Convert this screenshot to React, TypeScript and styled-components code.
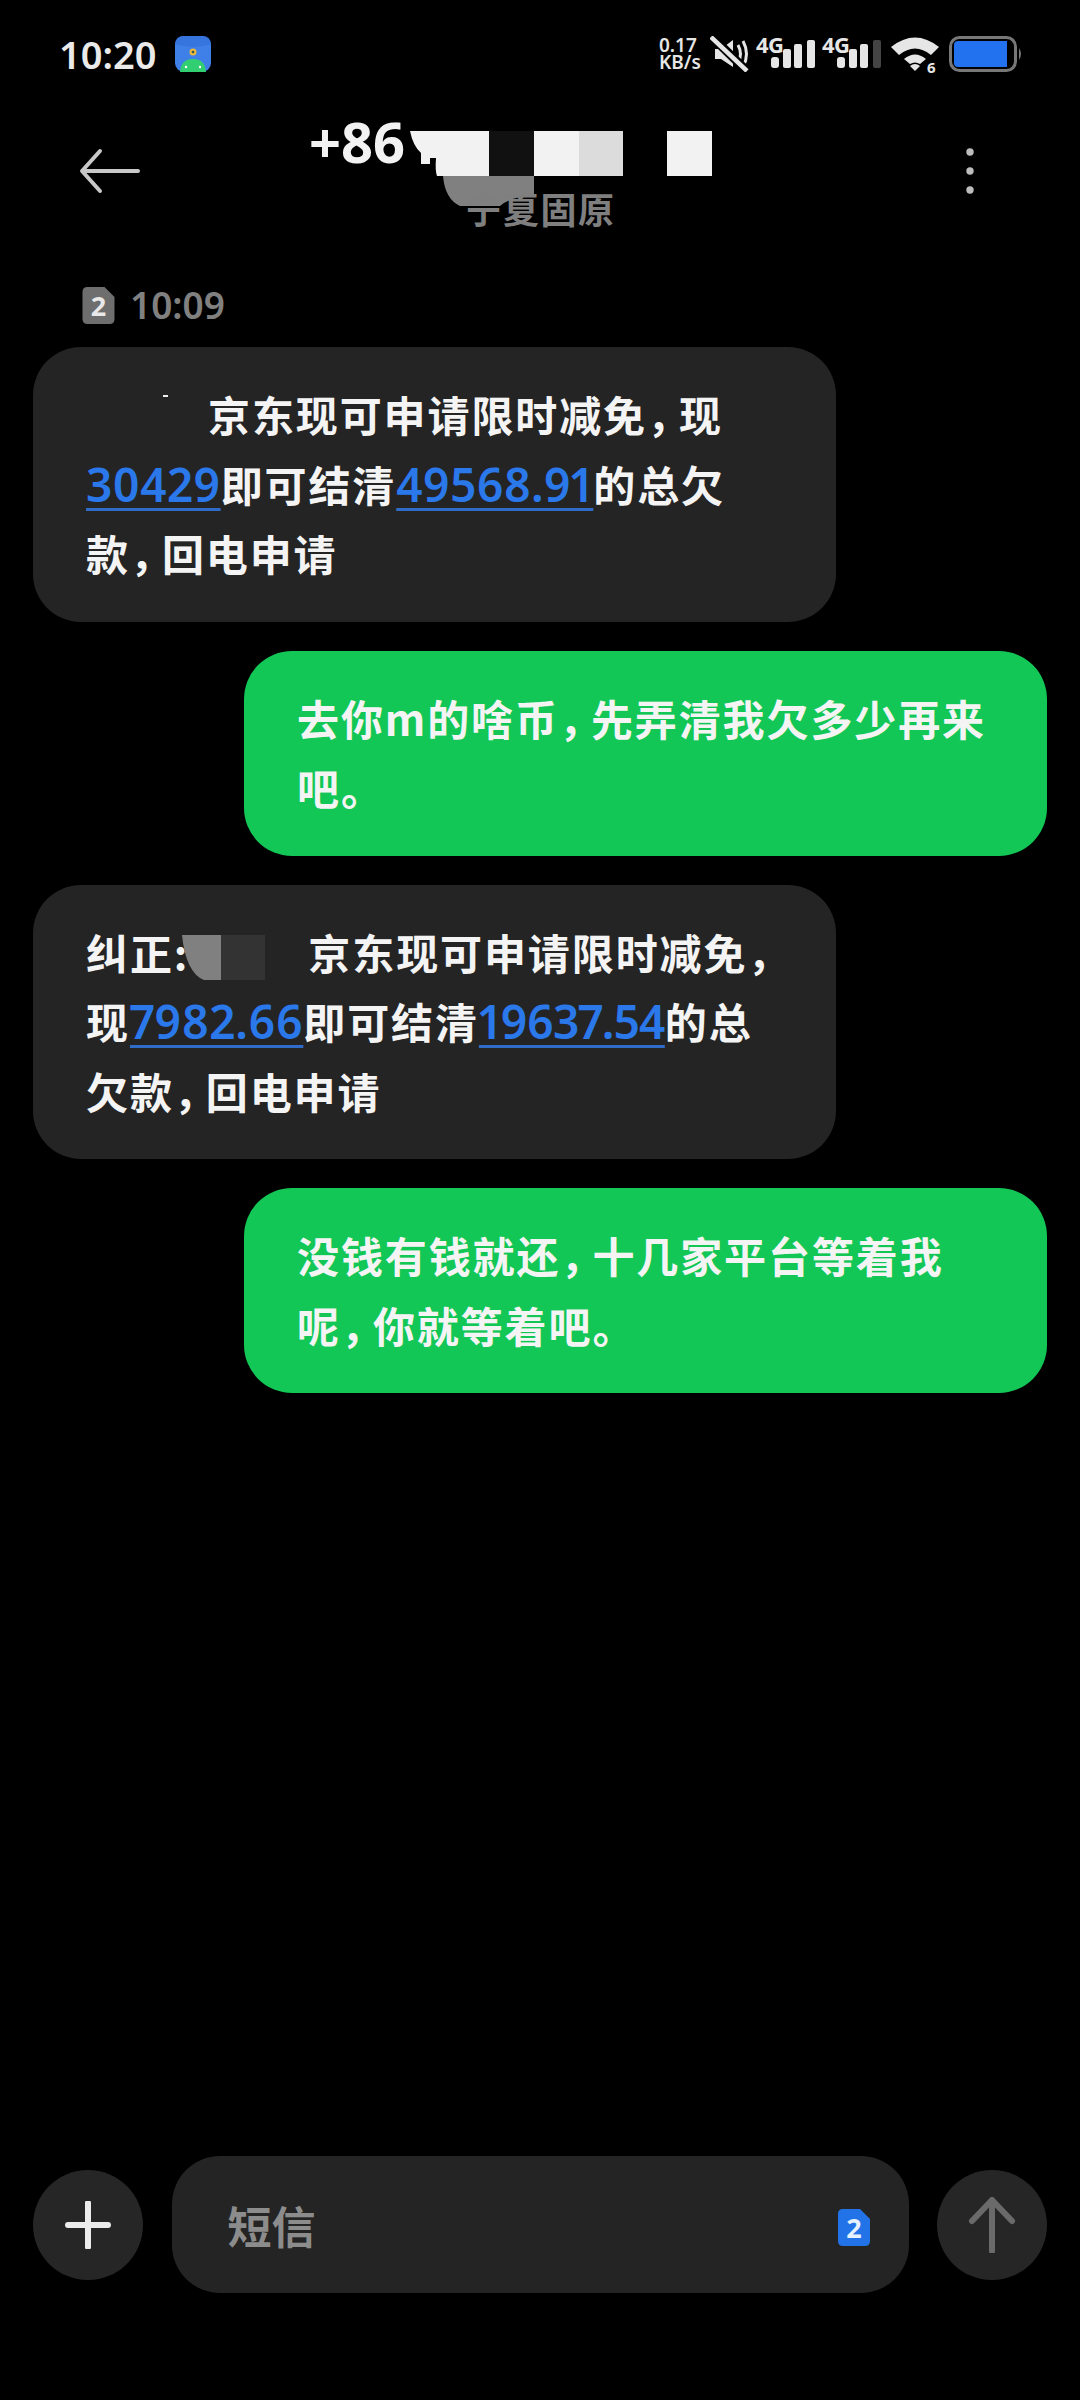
import React from "react";
import styled, { createGlobalStyle } from "styled-components";

const Global = createGlobalStyle`
  html, body { margin: 0; padding: 0; background: #000; }
  body { font-family: "Noto Sans CJK SC", "Noto Sans", sans-serif; }
`;

const Screen = styled.div`
  width: 1080px;
  height: 2400px;
  background: #000;
  display: flex;
  flex-direction: column;
  overflow: hidden;
`;

const StatusBar = styled.div`
  height: 72px;
  padding: 36px 57px 0 59px;
  display: flex;
  align-items: flex-start;
  box-sizing: content-box;
`;

const Clock = styled.div`
  font: 600 38px/36px "Noto Sans", sans-serif;
  color: #eaeaea;
  width: 116px;
`;

const StatusRight = styled.div`
  margin-left: auto;
  display: flex;
  align-items: flex-start;
  height: 36px;
`;

const Speed = styled.div`
  font: 600 19px/17px "Noto Sans", sans-serif;
  color: #e6e6e6;
  width: 51px;
  padding-top: 1px;
`;

const Header = styled.div`
  position: relative;
  height: 120px;
  margin-top: -2px;
  display: flex;
  flex-direction: column;
  align-items: center;
`;

const BackIcon = styled.svg`
  position: absolute;
  left: 78px;
  top: 38px;
`;

const MenuIcon = styled.svg`
  position: absolute;
  left: 962px;
  top: 39px;
`;

const Title = styled.div`
  align-self: flex-start;
  margin-left: 309px;
  display: flex;
  align-items: flex-start;
  height: 85px;
  font: 700 56px/70px "Noto Sans", sans-serif;
  color: #f2f2f2;
`;

const TitleMosaic = styled.div`
  position: absolute;
  left: 410px;
  top: 25px;
`;

const Subtitle = styled.div`
  font: 700 36px/36px "Noto Sans CJK SC", sans-serif;
  color: #7f7f7f;
  letter-spacing: 1.5px;
  margin-left: 1px;
  margin-top: 2px;
  position: relative;
`;

const TimeRow = styled.div`
  margin-top: 59px;
  margin-left: 82px;
  height: 40px;
  display: flex;
  align-items: center;
  gap: 15px;
  font: 600 37px/40px "Noto Sans", sans-serif;
  color: #808080;
`;

const Thread = styled.div`
  margin-top: 22px;
  padding: 0 33px 0 33px;
  display: flex;
  flex-direction: column;
  gap: 29px;
`;

const Bubble = styled.div<{ $out?: boolean }>`
  box-sizing: border-box;
  width: 803px;
  padding: 32px 20px 34px 53px;
  border-radius: 48px;
  align-self: ${(p) => (p.$out ? "flex-end" : "flex-start")};
  background: ${(p) => (p.$out ? "#12c755" : "#242424")};
  color: #f4f4f4;
  font-size: 42px;
  font-weight: 700;
  letter-spacing: 1.9px;
`;

const Line = styled.div`
  height: 69.5px;
  line-height: 69.5px;
  white-space: nowrap;
`;

const Num = styled.span<{ $track?: number }>`
  font-family: "Noto Sans", sans-serif;
  font-size: 46px;
  font-weight: 600;
  font-variant-numeric: proportional-nums;
  color: #2a78ea;
  text-decoration: underline;
  text-decoration-thickness: 3px;
  text-underline-offset: 6px;
  text-decoration-color: #2f6cc8;
  letter-spacing: ${(p) => p.$track ?? 0}px;
  line-height: 1;
`;

const Comma = styled.span`
  display: inline-block;
  width: 32px;
`;

const Blank = styled.span<{ $w: number }>`
  display: inline-block;
  position: relative;
  width: ${(p) => p.$w}px;
  height: 1px;
`;

const BlankArt = styled.svg<{ $x: number }>`
  position: absolute;
  left: ${(p) => p.$x}px;
  top: -36px;
`;

const Spacer = styled.div`
  flex: 1;
`;

const Composer = styled.div`
  display: flex;
  align-items: center;
  justify-content: space-between;
  padding: 0 33px;
  margin-bottom: 107px;
`;

const RoundButton = styled.div`
  width: 110px;
  height: 110px;
  border-radius: 50%;
  background: #262626;
  display: flex;
  align-items: center;
  justify-content: center;
`;

const Input = styled.div`
  box-sizing: border-box;
  width: 737px;
  height: 137px;
  border-radius: 48px;
  background: #242424;
  display: flex;
  align-items: center;
  justify-content: space-between;
  padding: 0 39px 0 56px;
  font: 700 44px/1 "Noto Sans CJK SC", sans-serif;
  color: #8c8c8c;
`;

const SimBadge = styled.svg`
  margin-top: 6px;
`;

const Sim = ({ fill, text }: { fill: string; text: string }) => (
  <g>
    <path d="M5 0H22L32 10V32Q32 37 27 37H5Q0 37 0 32V5Q0 0 5 0Z" fill={fill} />
    <text x="16" y="29" textAnchor="middle" fontFamily="Noto Sans" fontWeight="700" fontSize="27" fill={text}>2</text>
  </g>
);

const Bars = ({ dim }: { dim?: boolean }) => (
  <g fill="#e6e6e6">
    <rect x="15" y="21" width="8" height="11" rx="3" />
    <rect x="27" y="13" width="8" height="19" rx="2" />
    <rect x="38" y="8" width="8" height="24" rx="2" />
    <rect x="51" y="4" width="8" height="28" rx="2" fill={dim ? "#444" : "#e6e6e6"} />
    <text x="0" y="17" fontFamily="Noto Sans" fontWeight="700" fontSize="22" letterSpacing="-0.5">4G</text>
  </g>
);

export default function App() {
  return (
    <Screen>
      <Global />
      <StatusBar>
        <Clock>10:20</Clock>
        <svg width="36" height="36" viewBox="0 0 36 36">
          <rect width="36" height="36" rx="9" fill="#3f7fe8" />
          <path d="M0 8Q18 14 36 8V9Q36 0 27 0H9Q0 0 0 9Z" fill="#3674de" />
          <circle cx="18" cy="16" r="3.5" fill="#e8b93a" />
          <circle cx="18" cy="16" r="1.3" fill="#355" />
          <path d="M5 36Q6 23 18 23T31 36Z" fill="#32cf72" />
          <circle cx="11" cy="31" r="1.2" fill="#fff" />
          <circle cx="25" cy="31" r="1.2" fill="#fff" />
        </svg>
        <StatusRight>
          <Speed>0.17<br />KB/s</Speed>
          <svg width="46" height="36" viewBox="0 0 46 36">
            <path d="M5 13H11L23 4V31L11 23H5Z" fill="#e6e6e6" />
            <path d="M28 9Q33 18 28 27M33 5Q40 18 33 31" stroke="#e6e6e6" strokeWidth="3" fill="none" />
            <path d="M2 1L37 35" stroke="#000" strokeWidth="9" />
            <path d="M1 1L37 35" stroke="#e6e6e6" strokeWidth="4.5" />
          </svg>
          <svg width="66" height="36" viewBox="0 0 66 36"><Bars /></svg>
          <svg width="69" height="36" viewBox="0 0 69 36"><Bars dim /></svg>
          <svg width="58" height="38" viewBox="0 0 58 38">
            <path d="M0 11Q24 -8 48 11L40 19Q24 6 8 19Z" fill="#e6e6e6" />
            <path d="M13 23Q24 14 35 23L29 28Q24 25 19 28Z" fill="#e6e6e6" />
            <path d="M19 30Q24 26 29 30L24 35Z" fill="#e6e6e6" />
            <text x="36" y="37" fontFamily="Noto Sans" fontWeight="700" fontSize="15" fill="#e6e6e6">6</text>
          </svg>
          <svg width="74" height="36" viewBox="0 0 74 36">
            <rect x="1.5" y="1.5" width="65" height="33" rx="9" fill="#000" stroke="#777" strokeWidth="3" />
            <path d="M9 5H58V31H9Q5 31 5 27V9Q5 5 9 5Z" fill="#2272f0" />
            <path d="M70 12Q74 18 70 24Z" fill="#777" />
          </svg>
        </StatusRight>
      </StatusBar>

      <Header>
        <BackIcon width="64" height="50" viewBox="0 0 64 50">
          <path d="M60 27H5M22 7L4 27L22 47" stroke="#c8c8c8" strokeWidth="4" strokeLinecap="round" strokeLinejoin="round" fill="none" />
        </BackIcon>
        <Title>+86</Title>
        <TitleMosaic>
          <svg width="310" height="90" viewBox="0 0 310 90">
            <path d="M33 45H124V64Q100 66 90 75H50Q35 68 33 45Z" fill="#808080" />
            <path d="M0 0H79V45H27Q25 40 26 27H20V33H11V22Q3 15 0 0Z" fill="#f2f2f2" />
            <rect x="79" y="0" width="45" height="45" fill="#111" />
            <rect x="124" y="0" width="45" height="45" fill="#f2f2f2" />
            <rect x="169" y="0" width="44" height="45" fill="#dcdcdc" />
            <rect x="257" y="0" width="45" height="45" fill="#f2f2f2" />
          </svg>
        </TitleMosaic>
        <MenuIcon width="16" height="60" viewBox="0 0 16 60">
          <circle cx="8" cy="7" r="3.7" fill="#bdbdbd" />
          <circle cx="8" cy="26" r="3.7" fill="#bdbdbd" />
          <circle cx="8" cy="45" r="3.7" fill="#bdbdbd" />
        </MenuIcon>
        <Subtitle>宁夏固原</Subtitle>
      </Header>

      <TimeRow>
        <svg width="33" height="37" viewBox="0 0 32 37"><Sim fill="#6e6e6e" text="#e8e8e8" /></svg>
        10:09
      </TimeRow>

      <Thread>
        <Bubble>
          <Line>
            <Blank $w={122}>
              <BlankArt $x={0} width="123" height="40" viewBox="0 0 123 40">
                <rect x="77" y="0" width="5" height="2" fill="#eee" />
              </BlankArt>
            </Blank>
            京东现可申请限时减免<Comma>，</Comma>现
          </Line>
          <Line><Num $track={0.3}>30429</Num>即可结清<Num>49568.91</Num>的总欠</Line>
          <Line>款<Comma>，</Comma>回电申请</Line>
        </Bubble>
        <Bubble $out>
          <Line>去你m的啥币<Comma>，</Comma>先弄清我欠多少再来</Line>
          <Line>吧。</Line>
        </Bubble>
        <Bubble>
          <Line>
            纠正:
            <Blank $w={119}>
              <BlankArt $x={-7} width="90" height="50" viewBox="0 0 90 50">
                <path d="M0 2H39V47H22Q4 40 0 2Z" fill="#808080" />
                <rect x="39" y="2" width="44" height="45" fill="#333" />
              </BlankArt>
            </Blank>
            京东现可申请限时减免<Comma>，</Comma>
          </Line>
          <Line>现<Num $track={0.3}>7982.66</Num>即可结清<Num $track={-0.9}>19637.54</Num>的总</Line>
          <Line>欠款<Comma>，</Comma>回电申请</Line>
        </Bubble>
        <Bubble $out>
          <Line>没钱有钱就还<Comma>，</Comma>十几家平台等着我</Line>
          <Line>呢<Comma>，</Comma>你就等着吧。</Line>
        </Bubble>
      </Thread>

      <Spacer />

      <Composer>
        <RoundButton>
          <svg width="48" height="48" viewBox="0 0 48 48">
            <path d="M24 2V46M4 24H44" stroke="#ececec" strokeWidth="6" strokeLinecap="round" />
          </svg>
        </RoundButton>
        <Input>
          短信
          <SimBadge width="32" height="37" viewBox="0 0 32 37"><Sim fill="#2272e8" text="#e6f2ff" /></SimBadge>
        </Input>
        <RoundButton>
          <svg width="48" height="56" viewBox="0 0 48 56">
            <path d="M24 54V3M4 24L24 3L44 24" stroke="#6a6a6a" strokeWidth="6" strokeLinecap="round" strokeLinejoin="round" fill="none" />
          </svg>
        </RoundButton>
      </Composer>
    </Screen>
  );
}
